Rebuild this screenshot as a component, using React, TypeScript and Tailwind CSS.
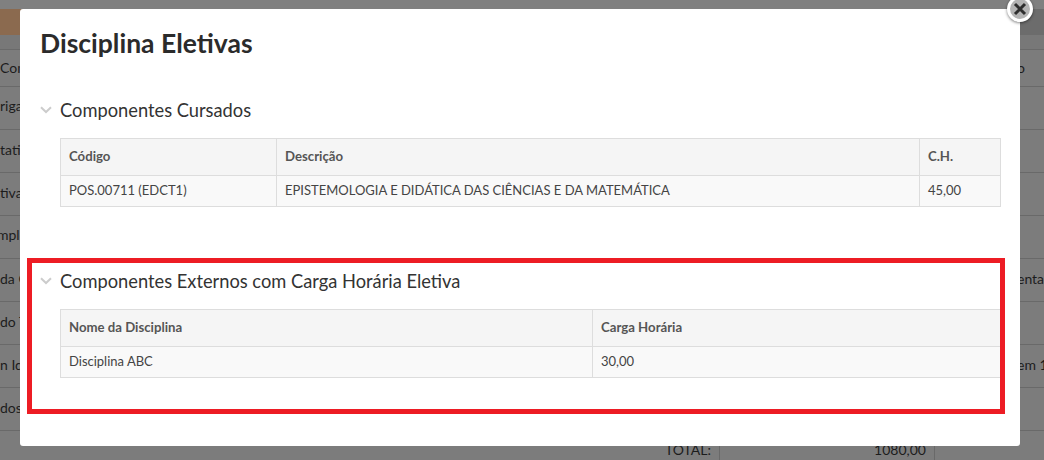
import React from "react";

const rows = [
  ["Componente", "o", "h-[37px] pt-[9px]", ""],
  ["rigatórias", "", "h-[43px] pt-[10px]", ""],
  ["tativas", "", "h-[43px] pt-[11px]", ""],
  ["tivas", "", "h-[43px] pt-[11px]", ""],
  ["mplementar", "", "h-[43px] pt-[10px]", "ml-[-3px]"],
  ["da Carga", "entação", "h-[43px] pt-[11px]", ""],
  ["do Trabalho", "", "h-[43px] pt-[11px]", ""],
  ["n Idioma", "em 1", "h-[43px] pt-[11px]", ""],
  ["dos", "", "h-[43px] pt-[11px]", ""],
];

function Chevron() {
  return (
    <svg width="12" height="8" viewBox="0 0 12 8" fill="none" className="shrink-0">
      <path d="M1 1.2 L6 6 L11 1.2" stroke="#cccccc" strokeWidth="2" />
    </svg>
  );
}

function Section({ title, headers, cells, widths }: { title: string; headers: string[]; cells: string[]; widths: string[] }) {
  return (
    <section>
      <div className="flex items-center gap-[8px] h-[24px]">
        <Chevron />
        <h2 className="text-[18.3px] leading-[22px] font-normal text-[#333]">{title}</h2>
      </div>
      <table className="ml-[20px] mt-[16px] w-[940px] table-fixed border-separate border-spacing-0 border-t border-l border-[#dddddd] text-[13px] text-[#444]">
        <thead>
          <tr className="h-[37px] bg-[#f5f5f5]">
            {headers.map((h, i) => (
              <th key={h} className={`${widths[i]} border-r border-b border-[#dddddd] px-[8px] text-left text-[13.2px] font-bold text-[#555]`}>
                {h}
              </th>
            ))}
          </tr>
        </thead>
        <tbody>
          <tr className="h-[31px] bg-[#f9f9f9]">
            {cells.map((c) => (
              <td key={c} className="border-r border-b border-[#dddddd] px-[8px] text-left">
                {c}
              </td>
            ))}
          </tr>
        </tbody>
      </table>
    </section>
  );
}

export default function App() {
  return (
    <div className="relative h-[460px] w-[1044px] overflow-hidden bg-[#7c7c7c] font-['Lato','Open_Sans',sans-serif]">
      <div className="h-[9px] bg-[#808080]" />
      <div className="flex h-[26px]">
        <div className="w-[500px] bg-[#8b6a4f]" />
        <div className="flex-1 bg-[#6c6c6c]" />
      </div>
      <div className="h-[15px] border-b border-[#6a6a6a] bg-[#787878]" />
      {rows.map(([l, r, c, m]) => (
        <div key={l} className={`flex justify-between border-b border-[#696969] text-[14px] leading-[18px] text-[#1c1c1c] ${c}`}>
          <span className={m}>{l}</span>
          <span className="w-[27px] whitespace-nowrap">{r}</span>
        </div>
      ))}
      <div className="flex h-[30px] text-[14px] text-[#1c1c1c]">
        <div className="w-[720px] border-r border-[#696969] pt-[8px] pr-[8px] text-right">TOTAL:</div>
        <div className="w-[215px] border-r border-[#696969] pt-[8px] pr-[8px] text-right">1080,00</div>
      </div>

      <div className="absolute left-[20px] top-[9px] h-[437px] w-[1000px] rounded-[3px] bg-white px-[20px]">
        <h1 className="mt-[16px] text-[26.5px] leading-[36px] font-bold text-[#2b2b2b]">Disciplina Eletivas</h1>
        <div className="mt-[37px]">
          <Section
            title="Componentes Cursados"
            headers={["Código", "Descrição", "C.H."]}
            cells={["POS.00711 (EDCT1)", "EPISTEMOLOGIA E DIDÁTICA DAS CIÊNCIAS E DA MATEMÁTICA", "45,00"]}
            widths={["w-[216px]", "w-[643px]", "w-[81px]"]}
          />
        </div>
        <div className="mt-[62px]">
          <Section
            title="Componentes Externos com Carga Horária Eletiva"
            headers={["Nome da Disciplina", "Carga Horária"]}
            cells={["Disciplina ABC", "30,00"]}
            widths={["w-[532px]", "w-[408px]"]}
          />
        </div>
      </div>

      <div className="absolute left-[27px] top-[258px] h-[156px] w-[978px] border-[5px] border-[#ed1c24]" />

      <div className="absolute left-[1007px] top-[-4px] flex h-[26px] w-[26px] items-center justify-center rounded-full border-[3px] border-white bg-[#b4b4b4] shadow-[0_1px_3px_rgba(0,0,0,0.5)]">
        <svg width="14" height="14" viewBox="0 0 14 14">
          <path d="M2 2 L12 12 M12 2 L2 12" stroke="#2e2e2e" strokeWidth="3" />
        </svg>
      </div>
    </div>
  );
}
